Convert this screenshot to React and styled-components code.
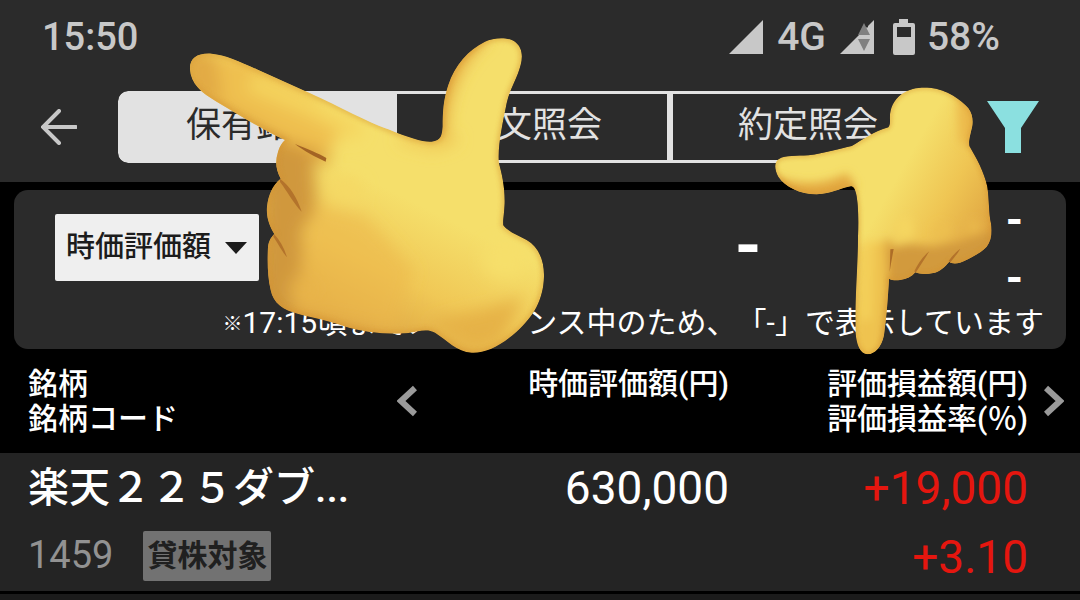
import { useState } from 'react';
import styled, { createGlobalStyle } from 'styled-components';

const GlobalStyle = createGlobalStyle`
  * {
    box-sizing: border-box;
  }
  body {
    margin: 0;
    background-color: #000;
    color: #fff;
    font-family: Roboto, 'Noto Sans CJK JP', sans-serif;
    text-spacing-trim: space-all;
  }
  button,
  select {
    font-family: inherit;
    cursor: pointer;
  }
`;

const Screen = styled.div`
  position: relative;
  display: flex;
  flex-direction: column;
  min-height: 100vh;
  overflow: hidden;
`;

const Header = styled.header`
  background-color: #2b2b2b;
  padding-bottom: 19px;
`;

const StatusBar = styled.div`
  display: flex;
  justify-content: space-between;
  align-items: center;
  height: 73px;
  margin-bottom: 18px;
  padding: 0 80px 0 42px;
  color: #c8c8c8;
  font-size: 38px;
  font-weight: 500;
`;

const StatusIcons = styled.div`
  display: flex;
  align-items: center;
  gap: 14px;
  font-size: 39px;
  svg {
    display: block;
  }
`;

const Battery = styled.span`
  display: flex;
  align-items: center;
  gap: 12px;
  margin-left: 5px;
`;

const NavBar = styled.div`
  display: flex;
  align-items: center;
  gap: 41px;
  padding: 0 41px;
`;

const IconButton = styled.button`
  display: block;
  flex-shrink: 0;
  padding: 0;
  border: none;
  background: transparent;
  svg {
    display: block;
  }
`;

const Tabs = styled.nav`
  display: flex;
  flex: 1;
  height: 72px;
  border-radius: 10px;
  overflow: hidden;
`;

const Tab = styled.button`
  flex: 1;
  padding: 0 0 2px;
  border: 3px solid #e2e2e2;
  border-radius: ${(props) => props.$radius || '0'};
  background-color: ${(props) => (props.$active ? '#e2e2e2' : '#2b2b2b')};
  color: ${(props) => (props.$active ? '#2b2b2b' : '#e2e2e2')};
  font-size: 35px;
  line-height: 40px;
`;

const Summary = styled.section`
  margin: 8px 14px 0;
  padding: 24px 22px 0 41px;
  height: 159px;
  border-radius: 14px;
  background-color: #2b2b2b;
`;

const SummaryRow = styled.div`
  display: flex;
  justify-content: space-between;
  align-items: flex-start;
  height: 89px;
`;

const SelectBox = styled.div`
  display: grid;
  align-items: center;
  height: 67px;
  select {
    grid-area: 1 / 1;
    height: 100%;
    padding: 0 47px 2px 11px;
    border: none;
    border-radius: 2px;
    appearance: none;
    background-color: #efefef;
    color: #1c1c1c;
    font-size: 29px;
    font-weight: 500;
  }
  svg {
    grid-area: 1 / 1;
    justify-self: end;
    margin-right: 12px;
    pointer-events: none;
  }
`;

const Total = styled.strong`
  flex: 1;
  padding-right: 244px;
  font-size: 68px;
  line-height: 65px;
  text-align: right;
`;

const Changes = styled.div`
  display: flex;
  flex-direction: column;
  padding-right: 21px;
  font-size: 44px;
  font-weight: 700;
  line-height: 58px;
  margin-top: -23px;
`;

const Note = styled.p`
  margin: 0;
  font-size: 30px;
  line-height: 40px;
  text-align: right;
  white-space: nowrap;
  small {
    font-size: 20px;
    vertical-align: 2px;
  }
`;

const HoldingsTable = styled.table`
  width: 100%;
  border-spacing: 0;
  table-layout: fixed;
  th,
  td {
    padding: 0;
    vertical-align: top;
  }
  .name {
    width: 397px;
  }
  .pnl {
    width: 351px;
  }
`;

const HeadCell = styled.th`
  height: 104px;
  font-size: 30px;
  font-weight: 500;
  line-height: 35px;
  text-align: left;
`;

const HeadContent = styled.div`
  display: flex;
  justify-content: ${(props) => props.$justify || 'flex-start'};
  align-items: center;
  gap: 16px;
  height: 70px;
  margin-top: 17px;
  padding-left: ${(props) => (props.$first ? '28px' : '0')};
  padding-right: ${(props) => (props.$last ? '16px' : '0')};
`;

const HeadText = styled.span`
  align-self: flex-start;
  white-space: nowrap;
`;

const HoldingRow = styled.tr`
  height: 141px;
  background-color: #242424;
  td {
    border-bottom: 3px solid #000;
  }
`;

const Name = styled.div`
  padding: 2px 0 0 28px;
  font-size: 41px;
  font-weight: 500;
  line-height: 66px;
  white-space: nowrap;
`;

const CodeLine = styled.div`
  display: flex;
  align-items: center;
  gap: 30px;
  height: 70px;
  padding: 0 0 2px 28px;
  color: #929292;
  font-size: 38px;
`;

const Badge = styled.span`
  height: 50px;
  margin-top: 2px;
  padding: 0 4px;
  border-radius: 2px;
  background-color: #727272;
  color: #202020;
  font-size: 30px;
  font-weight: 700;
  line-height: 50px;
`;

const Amount = styled.div`
  padding-top: 2px;
  padding-right: ${(props) => (props.$last ? '52px' : '0')};
  color: ${(props) => (props.$gain ? '#e5160f' : '#fff')};
  font-size: 46px;
  line-height: 67px;
  text-align: right;
`;

const NextRow = styled.div`
  flex: 1;
  background-color: #1b1b1b;
`;

const PointingHand = styled.svg`
  position: absolute;
  top: ${(props) => props.$top}px;
  left: ${(props) => props.$left}px;
  pointer-events: none;
`;

const tabs = [
  { label: '保有銘柄', radius: '10px 0 0 10px' },
  { label: '注文照会' },
  { label: '約定照会', radius: '0 10px 10px 0' },
];

const leftHand =
  'M30 118C28 85 52 68 95 71C135 74 180 95 230 118L380 185C450 215 560 275 625 298C690 325 730 337 755 335C785 332 786 312 788 290C788 245 790 210 805 165C825 105 865 60 915 35C940 22 985 20 1005 35C1025 50 1030 75 1022 105C1012 145 990 175 980 220C968 280 952 350 957 400C965 430 975 470 974 520C973 550 968 575 970 586C985 605 1010 615 1040 630C1075 650 1093 690 1092 740C1090 810 1060 860 1010 905C960 950 915 970 875 968C830 965 800 930 765 908C740 895 715 905 680 910C620 915 540 905 490 888C440 870 400 865 355 852C310 840 280 820 272 780C262 740 262 690 264 650C267 630 275 620 283 612C270 590 258 565 261 530C265 495 278 465 302 446C288 420 285 395 293 370C298 350 305 340 315 330C240 295 170 250 110 215C65 190 32 160 30 118Z';

const downHand =
  'M390 120C388 85 400 62 425 42C450 25 480 20 510 23C560 28 605 60 625 85C640 105 640 130 634 150C628 175 626 185 628 198C650 235 672 275 682 320C688 360 686 400 693 430C697 455 695 480 680 500C655 525 620 540 600 548C585 552 572 550 568 545C555 560 540 575 520 579C500 583 480 583 466 577C455 590 440 598 420 600C405 602 395 600 387 596C384 650 380 710 372 765C365 800 345 822 322 823C300 820 290 795 287 760C284 650 294 560 294 470C296 420 295 370 288 340C284 322 278 315 265 320C240 325 215 340 170 343C120 343 75 320 55 290C42 265 42 245 58 236C75 226 110 228 145 226C195 220 240 205 275 198C310 178 340 155 385 142C390 135 390 128 390 120Z';

const LeftPointingHand = () => (
  <PointingHand
    $top={30}
    $left={180}
    width="380"
    height="340"
    viewBox="0 0 1140 1020"
    aria-hidden="true"
  >
    <defs>
      <linearGradient
        id="leftSkin"
        gradientUnits="userSpaceOnUse"
        x1="790"
        y1="560"
        x2="590"
        y2="960"
      >
        <stop offset="0" stopColor="#f5df6b" />
        <stop offset="0.5" stopColor="#f0c856" />
        <stop offset="1" stopColor="#dba040" />
      </linearGradient>
      <clipPath id="leftClip">
        <path d={leftHand} />
      </clipPath>
      <filter id="leftSoft" x="-50%" y="-50%" width="200%" height="200%">
        <feGaussianBlur stdDeviation="24" />
      </filter>
      <filter id="leftEdge" x="-10%" y="-10%" width="120%" height="120%">
        <feGaussianBlur stdDeviation="8" />
      </filter>
    </defs>
    <g clipPath="url(#leftClip)">
      <path d={leftHand} fill="url(#leftSkin)" />
      <g filter="url(#leftSoft)">
        <path d="M0 60L200 80L400 190L500 290L430 380L300 320L20 200Z" fill="#efc050" />
        <path d="M0 60L100 60L130 200L40 220Z" fill="#e2aa45" />
        <path d="M90 225L300 338L450 390" stroke="#d89b3a" strokeWidth="30" fill="none" />
        <path d="M210 155L400 235L540 310" stroke="#f5d55e" strokeWidth="50" fill="none" />
        <path d="M250 320L400 380L410 540L365 600L370 760L330 870L240 860Z" fill="#d0983d" />
        <path d="M400 520L560 560L700 720L640 900L330 840Z" fill="#ecb94d" opacity="0.6" />
        <path d="M800 320C790 200 850 80 930 20L850 10L760 180L760 320Z" fill="#e3a53c" />
        <path d="M660 325L760 350L830 325" stroke="#efc150" strokeWidth="20" fill="none" />
        <ellipse cx="370" cy="775" rx="42" ry="32" fill="#e8b44a" />
        <ellipse cx="500" cy="480" rx="48" ry="38" fill="#f5d965" />
        <path d="M940 830L1030 800L960 940L880 960L740 880Z" fill="#e6b246" />
        <ellipse cx="975" cy="690" rx="66" ry="56" fill="#f6df6b" />
      </g>
      <path
        d={leftHand}
        fill="none"
        stroke="#d4912f"
        strokeWidth="12"
        opacity="0.6"
        filter="url(#leftEdge)"
      />
      <path d="M345 342C385 358 415 370 439 384L437 395C405 380 370 362 345 342Z" fill="#a36424" />
      <path d="M300 446C330 468 350 500 365 545C340 520 322 484 300 456Z" fill="#b3732b" />
      <path d="M282 612C300 630 313 655 321 682C303 660 292 636 280 620Z" fill="#b3732b" />
    </g>
  </PointingHand>
);

const DownPointingHand = () => (
  <PointingHand
    $top={80}
    $left={760}
    width="320"
    height="280"
    viewBox="0 0 960 840"
    aria-hidden="true"
  >
    <defs>
      <linearGradient
        id="downSkin"
        gradientUnits="userSpaceOnUse"
        x1="430"
        y1="260"
        x2="710"
        y2="420"
      >
        <stop offset="0" stopColor="#f5df6b" />
        <stop offset="0.5" stopColor="#efc553" />
        <stop offset="1" stopColor="#dfa441" />
      </linearGradient>
      <clipPath id="downClip">
        <path d={downHand} />
      </clipPath>
      <filter id="downSoft" x="-50%" y="-50%" width="200%" height="200%">
        <feGaussianBlur stdDeviation="14" />
      </filter>
      <filter id="downEdge" x="-10%" y="-10%" width="120%" height="120%">
        <feGaussianBlur stdDeviation="6" />
      </filter>
    </defs>
    <g clipPath="url(#downClip)">
      <path d={downHand} fill="url(#downSkin)" />
      <g filter="url(#downSoft)">
        <path d="M590 50L660 90L640 200L600 190Z" fill="#ecb94b" />
        <path d="M40 285C120 320 190 315 260 280L290 320L180 370L40 340Z" fill="#e3a83f" />
        <path d="M385 505L450 492L520 500L600 485L710 450L720 620L390 620Z" fill="#d29a3e" />
        <path d="M300 500L390 480L390 840L290 840Z" fill="#efc350" />
        <path d="M385 480L392 620L375 800" stroke="#d89b3a" strokeWidth="18" fill="none" />
        <path d="M325 480L318 720" stroke="#f5d35c" strokeWidth="26" fill="none" />
        <ellipse cx="435" cy="445" rx="24" ry="34" fill="#f5d661" />
        <ellipse cx="545" cy="450" rx="22" ry="22" fill="#edc050" />
        <ellipse cx="640" cy="440" rx="22" ry="22" fill="#e9b84b" />
      </g>
      <path
        d={downHand}
        fill="none"
        stroke="#d4912f"
        strokeWidth="10"
        opacity="0.6"
        filter="url(#downEdge)"
      />
      <path d="M391 508L401 507C397 528 393 550 389 575Z" fill="#ad6d27" />
      <path d="M508 514C495 535 480 558 467 578L463 574C474 550 488 530 508 514Z" fill="#b3732b" />
      <path d="M601 506C591 523 581 535 571 547L566 543C576 529 586 517 601 506Z" fill="#b3732b" />
    </g>
  </PointingHand>
);

const SignalIcon = ({ busy }) => (
  <svg width="34" height="34" viewBox="0 0 34 34" aria-hidden="true">
    <path d="M34 0V34H0Z" fill="#c8c8c8" />
    {busy && (
      <>
        <path d="M16 16L24 0H28V8L24 3L18 15Z" fill="#2b2b2b" />
        <path d="M24 3L30 15H18ZM18 19H30L24 31Z" fill="#808080" />
      </>
    )}
  </svg>
);

const Chevron = ({ left }) => (
  <svg width="20" height="32" viewBox="0 0 20 32" aria-hidden="true">
    <path
      d={left ? 'M18 3L4 16L18 29' : 'M2 3L16 16L2 29'}
      fill="none"
      stroke="#9a9a9a"
      strokeWidth="6"
    />
  </svg>
);

const App = () => {
  const [activeTab, setActiveTab] = useState('保有銘柄');

  return (
    <Screen>
      <GlobalStyle />
      <Header>
        <StatusBar>
          <span>15:50</span>
          <StatusIcons>
            <SignalIcon />
            <span>4G</span>
            <SignalIcon busy />
            <Battery>
              <svg width="22" height="36" viewBox="0 0 22 36" aria-hidden="true">
                <path
                  fillRule="evenodd"
                  fill="#c8c8c8"
                  d="M6 0H15V4H20Q22 4 22 6V34Q22 36 20 36H2Q0 36 0 34V6Q0 4 2 4H6ZM4 8V18H18V8Z"
                />
              </svg>
              58%
            </Battery>
          </StatusIcons>
        </StatusBar>
        <NavBar>
          <IconButton type="button" aria-label="戻る">
            <svg width="36" height="36" viewBox="0 0 36 36" fill="none" aria-hidden="true">
              <path
                d="M35 18H3M18 2L2 18L18 34"
                stroke="#c8c8c8"
                strokeWidth="4"
                strokeLinecap="round"
              />
            </svg>
          </IconButton>
          <Tabs>
            {tabs.map(({ label, radius }) => (
              <Tab
                key={label}
                type="button"
                $active={label === activeTab}
                $radius={radius}
                onClick={() => setActiveTab(label)}
              >
                {label}
              </Tab>
            ))}
          </Tabs>
          <IconButton type="button" aria-label="絞り込み">
            <svg width="52" height="52" viewBox="0 0 52 52" aria-hidden="true">
              <path d="M0 0H52L34 27V52H18V27Z" fill="#8be0e0" />
            </svg>
          </IconButton>
        </NavBar>
      </Header>

      <Summary>
        <SummaryRow>
          <SelectBox>
            <select aria-label="表示項目" defaultValue="時価評価額">
              <option>時価評価額</option>
            </select>
            <svg width="22" height="12" viewBox="0 0 22 12" aria-hidden="true">
              <path d="M0 0H22L11 12Z" fill="#1c1c1c" />
            </svg>
          </SelectBox>
          <Total>-</Total>
          <Changes>
            <span>-</span>
            <span>-</span>
          </Changes>
        </SummaryRow>
        <Note>
          <small>※</small>17:15頃までメンテナンス中のため、「-」で表示しています
        </Note>
      </Summary>

      <HoldingsTable>
        <colgroup>
          <col className="name" />
          <col />
          <col className="pnl" />
        </colgroup>
        <thead>
          <tr>
            <HeadCell>
              <HeadContent $first>
                <HeadText>
                  銘柄
                  <br />
                  銘柄コード
                </HeadText>
              </HeadContent>
            </HeadCell>
            <HeadCell>
              <HeadContent $justify="space-between">
                <IconButton type="button" aria-label="前の項目">
                  <Chevron left />
                </IconButton>
                <HeadText>時価評価額(円)</HeadText>
              </HeadContent>
            </HeadCell>
            <HeadCell>
              <HeadContent $justify="flex-end" $last>
                <HeadText>
                  評価損益額(円)
                  <br />
                  評価損益率(％)
                </HeadText>
                <IconButton type="button" aria-label="次の項目">
                  <Chevron />
                </IconButton>
              </HeadContent>
            </HeadCell>
          </tr>
        </thead>
        <tbody>
          <HoldingRow>
            <td>
              <Name>楽天２２５ダブ...</Name>
              <CodeLine>
                1459
                <Badge>貸株対象</Badge>
              </CodeLine>
            </td>
            <td>
              <Amount>630,000</Amount>
            </td>
            <td>
              <Amount $gain $last>
                +19,000
              </Amount>
              <Amount $gain $last>
                +3.10
              </Amount>
            </td>
          </HoldingRow>
        </tbody>
      </HoldingsTable>
      <NextRow />

      <LeftPointingHand />
      <DownPointingHand />
    </Screen>
  );
};

export default App;
